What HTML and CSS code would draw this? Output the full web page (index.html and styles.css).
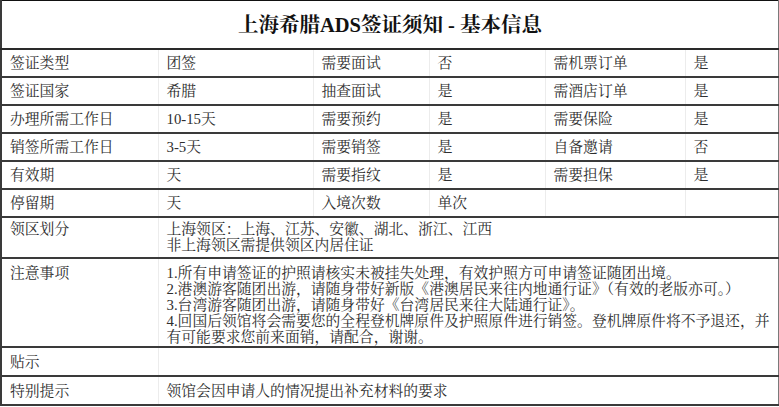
FILE: index.html
```html
<!DOCTYPE html>
<html lang="zh-CN">
<head>
<meta charset="utf-8">
<title>上海希腊ADS签证须知 - 基本信息</title>
<link rel="stylesheet" href="styles.css">
</head>
<body>
<table class="sheet">
  <colgroup>
    <col class="c1"><col class="c2"><col class="c3"><col class="c4"><col class="c5"><col class="c6">
  </colgroup>
  <tr class="title-row"><td colspan="6" class="title">上海希腊ADS签证须知 - 基本信息</td></tr>
  <tr class="row"><td>签证类型</td><td>团签</td><td>需要面试</td><td>否</td><td>需机票订单</td><td>是</td></tr>
  <tr class="row"><td>签证国家</td><td>希腊</td><td>抽查面试</td><td>是</td><td>需酒店订单</td><td>是</td></tr>
  <tr class="row"><td>办理所需工作日</td><td>10-15天</td><td>需要预约</td><td>是</td><td>需要保险</td><td>是</td></tr>
  <tr class="row"><td>销签所需工作日</td><td>3-5天</td><td>需要销签</td><td>是</td><td>自备邀请</td><td>否</td></tr>
  <tr class="row"><td>有效期</td><td>天</td><td>需要指纹</td><td>是</td><td>需要担保</td><td>是</td></tr>
  <tr class="row"><td>停留期</td><td>天</td><td>入境次数</td><td>单次</td><td></td><td></td></tr>
  <tr class="row-area"><td>领区划分</td><td colspan="5">上海领区：上海、江苏、安徽、湖北、浙江、江西<br>非上海领区需提供领区内居住证</td></tr>
  <tr class="row-notes"><td>注意事项</td><td colspan="5"><div>1.所有申请签证的护照请核实未被挂失处理，有效护照方可申请签证随团出境。</div><div>2.港澳游客随团出游，请随身带好新版《港澳居民来往内地通行证》（有效的老版亦可。）</div><div>3.台湾游客随团出游，请随身带好《台湾居民来往大陆通行证》。</div><div>4.回国后领馆将会需要您的全程登机牌原件及护照原件进行销签。登机牌原件将不予退还，并</div><div>有可能要求您前来面销，请配合，谢谢。</div></td></tr>
  <tr class="row-tip"><td>贴示</td><td colspan="5"></td></tr>
  <tr class="row-last"><td>特别提示</td><td colspan="5">领馆会因申请人的情况提出补充材料的要求</td></tr>
</table>
</body>
</html>
```

FILE: styles.css
```css
html, body {
  margin: 0;
  padding: 0;
  background: #ffffff;
}

.sheet {
  border-collapse: collapse;
  table-layout: fixed;
  width: 778px;
  font-family: "Liberation Serif", "Noto Serif CJK SC", "Noto Sans CJK SC", serif;
  font-size: 14.8px;
  color: #2e2e2e;
}

.c1 { width: 157px; }
.c2 { width: 155px; }
.c3 { width: 116px; }
.c4 { width: 116px; }
.c5 { width: 140px; }
.c6 { width: 94px; }

.sheet td {
  border-top: 2px solid #3a3a3a;
  border-bottom: 2px solid #3a3a3a;
  border-left: 1px solid #ececec;
  border-right: 1px solid #ececec;
  padding: 0 0 0 8px;
  line-height: 16px;
  vertical-align: middle;
  white-space: nowrap;
}

.sheet td:first-child {
  border-left: 2px solid #3a3a3a;
}

.sheet td:last-child {
  border-right: 2px solid #7a7a7a;
}

.title-row td {
  border: 1px solid #111;
  border-bottom: 2px solid #2a2a2a;
  height: 47px;
  text-align: center;
  padding: 0;
  font-size: 20.5px;
  font-weight: bold;
  color: #111;
}

.row td {
  height: 26px;
}

.row-area td {
  height: 36px;
  vertical-align: top;
  padding-top: 3px;
}

.row-notes td {
  height: 81px;
  vertical-align: top;
  padding-top: 6px;
}

.row-tip td {
  height: 27px;
}

.row-last td {
  height: 27px;
}
```
